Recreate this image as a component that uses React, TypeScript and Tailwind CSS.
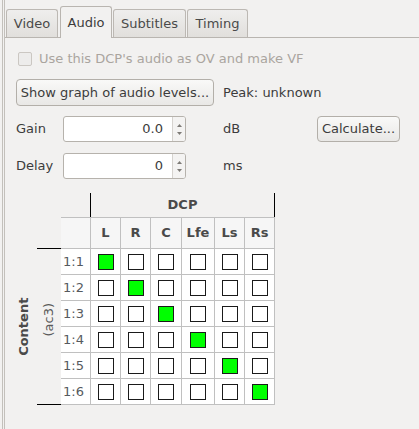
import React from 'react';

const channels = [
  { label: 'L', w: 'w-[30px]' },
  { label: 'R', w: 'w-[30px]' },
  { label: 'C', w: 'w-[31px]' },
  { label: 'Lfe', w: 'w-[33px]' },
  { label: 'Ls', w: 'w-[30px]' },
  { label: 'Rs', w: 'w-[30px]' },
];

const rows = ['1:1', '1:2', '1:3', '1:4', '1:5', '1:6'];

const Tab: React.FC<{ label: string; active?: boolean; className: string }> = ({ label, active, className }) => (
  <div
    className={
      active
        ? `relative h-[32px] -mb-px flex items-center justify-center rounded-t-[3px] border border-b-0 border-[#b9b5b0] bg-[#f2f1f0] text-[#3c3c3c] ${className}`
        : `h-[28px] flex items-center justify-center rounded-t-[3px] border border-b-0 border-[#bcb8b3] bg-gradient-to-b from-[#efeeed] to-[#e1dfdc] text-[#4a4a4a] ${className}`
    }
  >
    {label}
  </div>
);

const SpinBox: React.FC<{ value: string }> = ({ value }) => (
  <div className="flex h-[26px] w-[123px] overflow-hidden rounded-[3px] border border-[#b6b2ac] bg-white">
    <div className="flex flex-1 items-center justify-end pr-[9px] text-[#3c3c3c]">{value}</div>
    <div className="flex w-[13px] flex-col items-center justify-center gap-[5px] border-l border-[#d6d3cf] bg-[#f4f3f2]">
      <svg width="5" height="3" viewBox="0 0 5 3">
        <path d="M0 3 L2.5 0 L5 3 Z" fill="#7d7a76" />
      </svg>
      <svg width="5" height="3" viewBox="0 0 5 3">
        <path d="M0 0 L2.5 3 L5 0 Z" fill="#7d7a76" />
      </svg>
    </div>
  </div>
);

export default function App() {
  return (
    <div className="flex h-[429px] w-[419px] overflow-hidden bg-[#f2f1f0] font-['DejaVu_Sans',sans-serif] text-[13px] text-[#3c3c3c]">
      <div className="ml-[2px] w-px bg-[#c3c0bb]" />
      <div className="ml-px w-px bg-[#c3c0bb]" />

      <div className="flex flex-1 flex-col">
        <div className="flex h-[38px] items-end border-b border-[#b9b5b0]">
          <Tab label="Video" className="ml-px w-[52px]" />
          <Tab label="Audio" active className="ml-[2px] w-[52px]" />
          <Tab label="Subtitles" className="ml-px w-[73px]" />
          <Tab label="Timing" className="ml-px w-[61px]" />
        </div>

        <div className="flex flex-col px-[11px]">
          <div className="mt-[12px] flex h-[18px] items-center">
            <div className="ml-[2px] h-[14px] w-[14px] rounded-[2px] border border-[#cbc7c2] bg-[#edeceb]" />
            <span className="ml-[7px] text-[#aaa59f]">Use this DCP's audio as OV and make VF</span>
          </div>

          <div className="mt-[11px] flex items-center">
            <button className="h-[27px] w-[198px] rounded-[4px] border border-[#b3afa9] bg-gradient-to-b from-[#f9f9f8] to-[#e9e8e6] text-[#3c3c3c]">
              Show graph of audio levels...
            </button>
            <span className="ml-[9px]">Peak: unknown</span>
          </div>

          <div className="mt-[10px] flex h-[26px] items-center">
            <span className="w-[47px]">Gain</span>
            <SpinBox value="0.0" />
            <span className="ml-[37px] w-[94px]">dB</span>
            <button className="h-[26px] w-[83px] rounded-[4px] border border-[#b3afa9] bg-gradient-to-b from-[#f9f9f8] to-[#e9e8e6] text-[#3c3c3c]">
              Calculate...
            </button>
          </div>

          <div className="mt-[11px] flex h-[26px] items-center">
            <span className="w-[47px]">Delay</span>
            <SpinBox value="0" />
            <span className="ml-[37px]">ms</span>
          </div>

          <div className="mt-[14px] flex flex-col">
            <div className="flex h-[24px]">
              <div className="w-[74px]" />
              <div className="flex w-[185px] items-center justify-center border-x border-black font-bold text-[#4a4a4a]">
                DCP
              </div>
            </div>

            <div className="flex">
              <div className="flex w-[45px] flex-col">
                <div className="h-[31px]" />
                <div className="flex h-[157px]">
                  <div className="flex w-[17px] items-center justify-center">
                    <span className="-rotate-90 whitespace-nowrap font-bold text-[#4a4a4a]">Content</span>
                  </div>
                  <div className="ml-[4px] flex w-[24px] items-center justify-center border-y border-black pb-[14px]">
                    <span className="-rotate-90 whitespace-nowrap text-[#5a5a5a]">(ac3)</span>
                  </div>
                </div>
              </div>

              <div className="flex flex-col">
                <div className="flex">
                  <div className="h-[32px] w-[30px] border-y border-r border-[#c0c0c0] bg-[#f6f6f6]" />
                  {channels.map(c => (
                    <div
                      key={c.label}
                      className={`flex h-[32px] items-center justify-center border-y border-r border-[#c0c0c0] bg-[#f6f6f6] font-bold text-[#4a4a4a] ${c.w}`}
                    >
                      {c.label}
                    </div>
                  ))}
                </div>
                {rows.map((r, i) => (
                  <div key={r} className="flex">
                    <div className="flex h-[26px] w-[30px] items-center border-b border-r border-[#c0c0c0] bg-white pl-[2px] text-[#565a5e]">
                      {r}
                    </div>
                    {channels.map((c, j) => (
                      <div
                        key={c.label}
                        className={`flex h-[26px] items-center justify-center border-b border-r border-[#c0c0c0] bg-white ${c.w}`}
                      >
                        <div
                          className={
                            i === j
                              ? 'h-[16px] w-[16px] border border-[#1a1a1a] bg-[#00ff00]'
                              : 'h-[16px] w-[16px] border border-[#1a1a1a] bg-white'
                          }
                        />
                      </div>
                    ))}
                  </div>
                ))}
              </div>
            </div>
          </div>
        </div>
      </div>
    </div>
  );
}
